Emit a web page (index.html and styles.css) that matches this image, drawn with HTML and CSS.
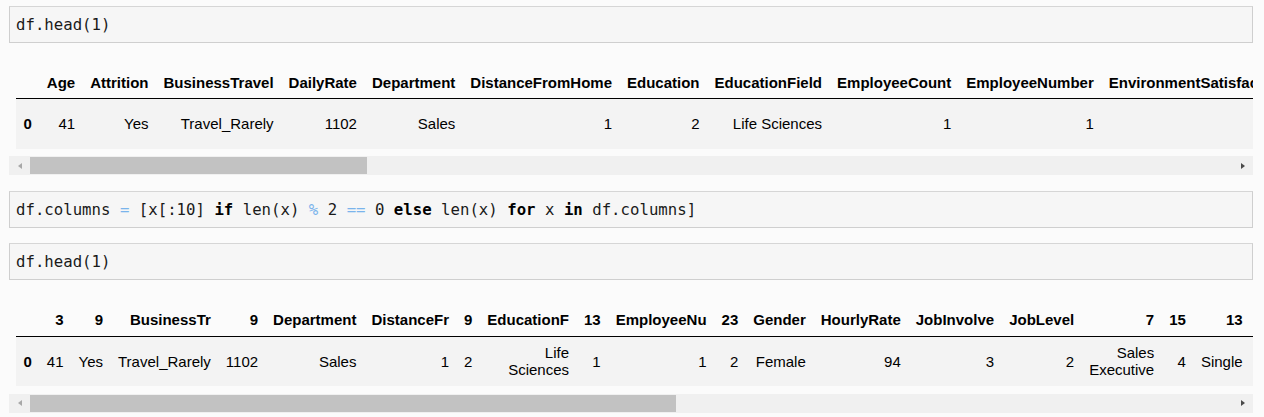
FILE: index.html
```html
<!DOCTYPE html>
<html lang="en">
<head>
<meta charset="utf-8">
<title>Notebook</title>
<link rel="stylesheet" href="styles.css">
</head>
<body>
<div class="nb">
  <div class="input">df.head(1)</div>
  <div class="output">
    <div class="scroll">
      <table class="dataframe">
        <thead>
          <tr><th></th><th>Age</th><th>Attrition</th><th>BusinessTravel</th><th>DailyRate</th><th>Department</th><th>DistanceFromHome</th><th>Education</th><th>EducationField</th><th>EmployeeCount</th><th>EmployeeNumber</th><th>EnvironmentSatisfaction</th><th>Gender</th><th>HourlyRate</th><th>JobInvolvement</th><th>JobLevel</th><th>JobRole</th></tr>
        </thead>
        <tbody>
          <tr><th>0</th><td>41</td><td>Yes</td><td>Travel_Rarely</td><td>1102</td><td>Sales</td><td>1</td><td>2</td><td>Life Sciences</td><td>1</td><td>1</td><td>2</td><td>Female</td><td>94</td><td>3</td><td>2</td><td>Sales Executive</td></tr>
        </tbody>
      </table>
    </div>
    <div class="scrollbar">
      <span class="btn"><span class="arrow-left"></span></span>
      <div class="track"><div class="thumb thumb-one"></div></div>
      <span class="btn"><span class="arrow-right"></span></span>
    </div>
  </div>

  <div class="input input-gap">df.columns <span class="op">=</span> [x[:10] <span class="kw">if</span> len(x) <span class="op">%</span> 2 <span class="op">==</span> 0 <span class="kw">else</span> len(x) <span class="kw">for</span> x <span class="kw">in</span> df.columns]</div>
  <div class="input input-gap2">df.head(1)</div>

  <div class="output">
    <div class="scroll">
      <table class="dataframe">
        <thead>
          <tr><th></th><th>3</th><th>9</th><th>BusinessTr</th><th>9</th><th>Department</th><th>DistanceFr</th><th>9</th><th>EducationF</th><th>13</th><th>EmployeeNu</th><th>23</th><th>Gender</th><th>HourlyRate</th><th>JobInvolve</th><th>JobLevel</th><th>7</th><th>15</th><th>13</th><th>13</th></tr>
        </thead>
        <tbody>
          <tr><th>0</th><td>41</td><td>Yes</td><td>Travel_Rarely</td><td>1102</td><td>Sales</td><td>1</td><td>2</td><td>Life Sciences</td><td>1</td><td>1</td><td>2</td><td>Female</td><td>94</td><td>3</td><td>2</td><td>Sales Executive</td><td>4</td><td>Single</td><td>5993</td></tr>
        </tbody>
      </table>
    </div>
    <div class="scrollbar">
      <span class="btn"><span class="arrow-left"></span></span>
      <div class="track"><div class="thumb thumb-two"></div></div>
      <span class="btn"><span class="arrow-right"></span></span>
    </div>
  </div>
</div>
</body>
</html>
```
FILE: styles.css
```css
html, body {
  margin: 0;
  padding: 0;
  background: #fbfbfb;
}

.nb {
  display: flex;
  flex-direction: column;
  padding: 6px 11px 0 9px;
}

.input {
  box-sizing: border-box;
  height: 37px;
  border: 1px solid #cfcfcf;
  border-top-color: #d6d6d6;
  background: #f6f6f6;
  padding: 0 6px;
  font-family: "DejaVu Sans Mono", monospace;
  font-size: 15.7px;
  line-height: 35px;
  color: #1a1a1a;
  white-space: pre;
}

.input-gap { margin-top: 16px; }
.input-gap2 { margin-top: 15px; }

.op { color: #7ab4ec; }
.kw { font-weight: bold; color: #000; }

.output {
  margin-top: 23px;
}

.scroll {
  overflow: hidden;
  padding-left: 7px;
}

.dataframe {
  border-collapse: collapse;
  border-spacing: 0;
  border: none;
  font-family: "Liberation Sans", Arial, sans-serif;
  font-size: 15px;
  color: #000;
}

.dataframe thead {
  border-bottom: 1px solid #000;
  vertical-align: bottom;
}

.dataframe th,
.dataframe td {
  text-align: right;
  vertical-align: middle;
  padding: 7.5px;
  line-height: 17.25px;
  border: none;
}

.dataframe th {
  font-weight: bold;
}

.dataframe tbody tr {
  background: #f3f3f3;
}

.scrollbar {
  margin-top: 7.5px;
  height: 19px;
  background: #f0f0f0;
  display: flex;
  align-items: center;
}

.btn {
  width: 21px;
  height: 19px;
  display: flex;
  align-items: center;
  justify-content: center;
  flex: none;
}

.arrow-left {
  width: 0;
  height: 0;
  border-top: 3.5px solid transparent;
  border-bottom: 3.5px solid transparent;
  border-right: 4px solid #a8a8a8;
}

.arrow-right {
  width: 0;
  height: 0;
  border-top: 3.5px solid transparent;
  border-bottom: 3.5px solid transparent;
  border-left: 4px solid #4a4a4a;
}

.track {
  flex: 1;
  height: 19px;
  display: flex;
  align-items: center;
}

.thumb {
  height: 17px;
  background: #c2c2c2;
}

.thumb-one { width: 337px; }
.thumb-two { width: 646px; }
```
